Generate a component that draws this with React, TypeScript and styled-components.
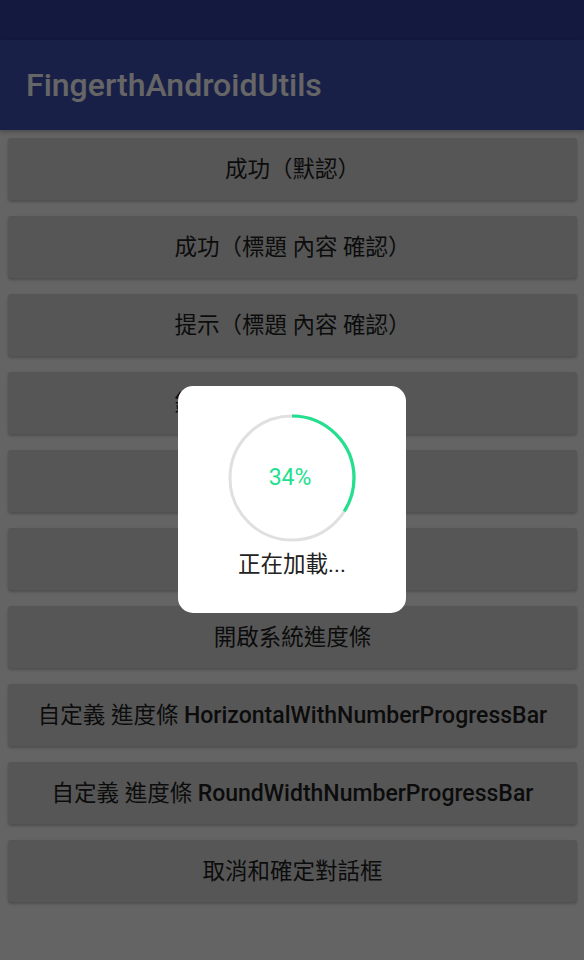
import React from "react";
import styled, { createGlobalStyle } from "styled-components";

const GlobalStyle = createGlobalStyle`
  html, body {
    margin: 0;
    padding: 0;
    background: #fafafa;
  }
  body {
    font-family: Roboto, "Noto Sans CJK TC", sans-serif;
    -webkit-font-smoothing: antialiased;
  }
  * { box-sizing: border-box; }
`;

const Screen = styled.div`
  position: relative;
  width: 584px;
  height: 960px;
  overflow: hidden;
  background: #fafafa;
  display: flex;
  flex-direction: column;
`;

const StatusBar = styled.div`
  height: 40px;
  background: #303f9f;
  flex-shrink: 0;
`;

const Toolbar = styled.div`
  height: 90px;
  background: #3f51b5;
  display: flex;
  align-items: center;
  padding-left: 26px;
  flex-shrink: 0;
  box-shadow: 0 2px 4px rgba(0, 0, 0, 0.25);
  position: relative;
  z-index: 1;
`;

const Title = styled.h1`
  margin: 0;
  font-family: Roboto, sans-serif;
  font-weight: 500;
  font-size: 32px;
  color: #ffffff;
  letter-spacing: 0;
`;

const List = styled.div`
  display: flex;
  flex-direction: column;
  gap: 16px;
  padding: 8px 7px 0 8px;
`;

const Button = styled.button`
  height: 62px;
  width: 100%;
  border: none;
  border-radius: 3px;
  background: #d6d7d7;
  box-shadow: 0 2px 3px rgba(0, 0, 0, 0.22), 0 0 1px rgba(0, 0, 0, 0.12);
  color: #1e1e1e;
  font-family: Roboto, "Noto Sans CJK TC", sans-serif;
  font-size: 22.5px;
  font-weight: 400;
  display: flex;
  align-items: center;
  justify-content: center;
  padding: 0 0 4px 0;
  white-space: nowrap;
`;

const Label = styled.span`
  display: inline;
`;

const Latin = styled.span`
  font-weight: 500;
  font-size: 23px;
`;

const Overlay = styled.div`
  position: absolute;
  inset: 0;
  z-index: 10;
  background: rgba(0, 0, 0, 0.6);
  display: flex;
  align-items: center;
  justify-content: center;
  padding-top: 38px;
`;

const Dialog = styled.div`
  width: 228px;
  height: 227px;
  background: #ffffff;
  border-radius: 15px;
  display: flex;
  flex-direction: column;
  align-items: center;
  padding-top: 28px;
`;

const RingWrap = styled.div`
  position: relative;
  width: 128px;
  height: 128px;
`;

const Percent = styled.div`
  position: absolute;
  inset: 0;
  display: flex;
  align-items: center;
  justify-content: center;
  padding-right: 4px;
  font-family: Roboto, sans-serif;
  font-size: 23px;
  color: #22e08e;
`;

const Loading = styled.div`
  margin-top: 9px;
  font-family: Roboto, "Noto Sans CJK TC", sans-serif;
  font-size: 22.5px;
  line-height: 27px;
  color: #222222;
`;

type Item = { cjk: string; latin?: string };

const buttons: Item[] = [
  { cjk: "成功（默認）" },
  { cjk: "成功（標題 內容 確認）" },
  { cjk: "提示（標題 內容 確認）" },
  { cjk: "錯誤（標題 內容 確認）" },
  { cjk: "警告（默認）" },
  { cjk: "加載框" },
  { cjk: "開啟系統進度條" },
  { cjk: "自定義 進度條 ", latin: "HorizontalWithNumberProgressBar" },
  { cjk: "自定義 進度條 ", latin: "RoundWidthNumberProgressBar" },
  { cjk: "取消和確定對話框" },
];

const Ring: React.FC<{ progress: number }> = ({ progress }) => {
  const r = 62;
  const c = 2 * Math.PI * r;
  return (
    <svg width="128" height="128" viewBox="0 0 128 128">
      <circle cx="64" cy="64" r={r} fill="none" stroke="#e0e0e0" strokeWidth="3" />
      <circle
        cx="64"
        cy="64"
        r={r}
        fill="none"
        stroke="#22e08e"
        strokeWidth="3.2"
        strokeDasharray={`${(c * progress) / 100} ${c}`}
        transform="rotate(-90 64 64)"
      />
    </svg>
  );
};

export default function App() {
  const progress = 34;
  return (
    <>
      <GlobalStyle />
      <Screen>
        <StatusBar />
        <Toolbar>
          <Title>FingerthAndroidUtils</Title>
        </Toolbar>
        <List>
          {buttons.map((b) => (
            <Button key={b.cjk + (b.latin ?? "")}>
              <Label>
                {b.cjk}
                {b.latin && <Latin>{b.latin}</Latin>}
              </Label>
            </Button>
          ))}
        </List>
        <Overlay>
          <Dialog>
            <RingWrap>
              <Ring progress={progress} />
              <Percent>{progress}%</Percent>
            </RingWrap>
            <Loading>正在加載...</Loading>
          </Dialog>
        </Overlay>
      </Screen>
    </>
  );
}
